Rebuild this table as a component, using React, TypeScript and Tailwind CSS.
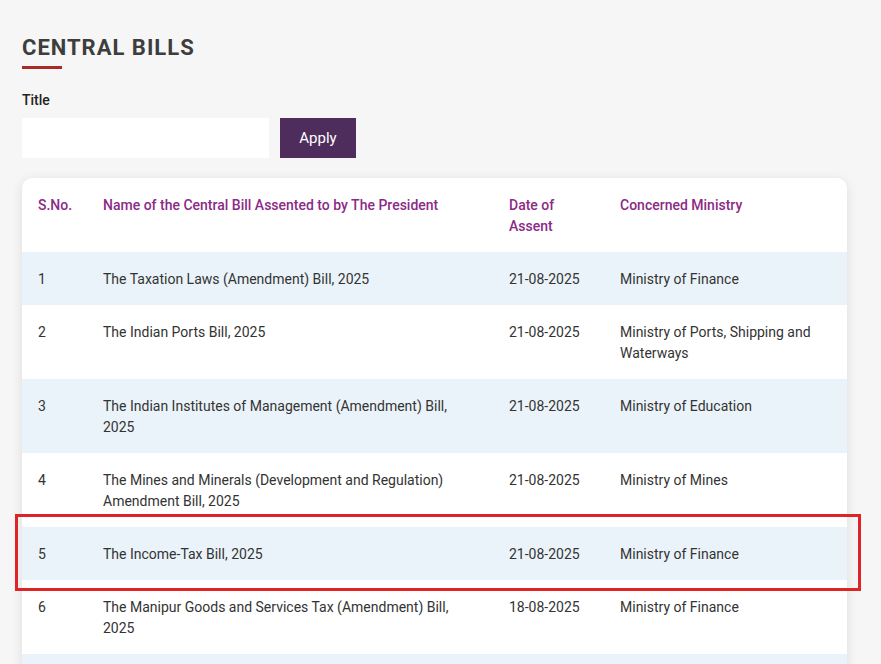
type Bill = {
  no: number;
  name: string;
  date: string;
  ministry: string;
};

const bills: Bill[] = [
  { no: 1, name: "The Taxation Laws (Amendment) Bill, 2025", date: "21-08-2025", ministry: "Ministry of Finance" },
  { no: 2, name: "The Indian Ports Bill, 2025", date: "21-08-2025", ministry: "Ministry of Ports, Shipping and Waterways" },
  { no: 3, name: "The Indian Institutes of Management (Amendment) Bill, 2025", date: "21-08-2025", ministry: "Ministry of Education" },
  { no: 4, name: "The Mines and Minerals (Development and Regulation) Amendment Bill, 2025", date: "21-08-2025", ministry: "Ministry of Mines" },
  { no: 5, name: "The Income-Tax Bill, 2025", date: "21-08-2025", ministry: "Ministry of Finance" },
  { no: 6, name: "The Manipur Goods and Services Tax (Amendment) Bill, 2025", date: "18-08-2025", ministry: "Ministry of Finance" },
  { no: 7, name: "The Readjustment of Representation of Scheduled Tribes in Assembly Constituencies of the State of Goa Bill, 2025", date: "18-08-2025", ministry: "Ministry of Law and Justice" },
];

export default function App() {
  return (
    <div className="relative h-[664px] overflow-hidden bg-[#f6f6f6] px-[22px] pt-[36px] font-['Roboto',sans-serif] text-[#333]">
      <h1 className="text-[22px] font-bold leading-[24px] tracking-[1px] text-[#3d3d3d]">CENTRAL BILLS</h1>
      <div className="mt-[6px] h-[3px] w-[40px] bg-[#a82b2b]" />

      <div className="mt-[23px] text-[14px] font-medium leading-[16px] text-[#222]">Title</div>
      <div className="mt-[10px] flex gap-[11px]">
        <input className="h-[40px] w-[247px] bg-white px-3 text-[14px] outline-none" />
        <button className="h-[40px] w-[76px] bg-[#4e2d5c] text-[15px] text-white">Apply</button>
      </div>

      <div className="mt-[20px] w-[825px] overflow-hidden rounded-[10px] bg-white shadow-[0_2px_12px_rgba(0,0,0,0.1)]">
        <table className="w-full table-fixed border-collapse text-left text-[14px] leading-[21px]">
          <colgroup>
            <col className="w-[65px]" />
            <col className="w-[406px]" />
            <col className="w-[111px]" />
            <col className="w-[243px]" />
          </colgroup>
          <thead>
            <tr className="align-top font-medium text-[#8c2a86]">
              <th className="px-[16px] pb-[15px] pt-[17px] font-medium">S.No.</th>
              <th className="px-[16px] pb-[15px] pt-[17px] font-medium">Name of the Central Bill Assented to by The President</th>
              <th className="px-[16px] pb-[15px] pt-[17px] font-medium">Date of Assent</th>
              <th className="px-[16px] pb-[15px] pt-[17px] font-medium">Concerned Ministry</th>
            </tr>
          </thead>
          <tbody>
            {bills.map((b, i) => (
              <tr key={b.no} className={`align-top ${i % 2 === 0 ? "bg-[#ebf3fa]" : "bg-white"}`}>
                <td className="px-[16px] pb-[15px] pt-[17px]">{b.no}</td>
                <td className="px-[16px] pb-[15px] pt-[17px]">{b.name}</td>
                <td className="px-[16px] pb-[15px] pt-[17px]">{b.date}</td>
                <td className="px-[16px] pb-[15px] pt-[17px]">{b.ministry}</td>
              </tr>
            ))}
          </tbody>
        </table>
      </div>

      {/* annotation box around row 5 */}
      <div className="absolute left-[15px] top-[514px] h-[77px] w-[846px] border-[3px] border-[#df2327]" />
    </div>
  );
}
